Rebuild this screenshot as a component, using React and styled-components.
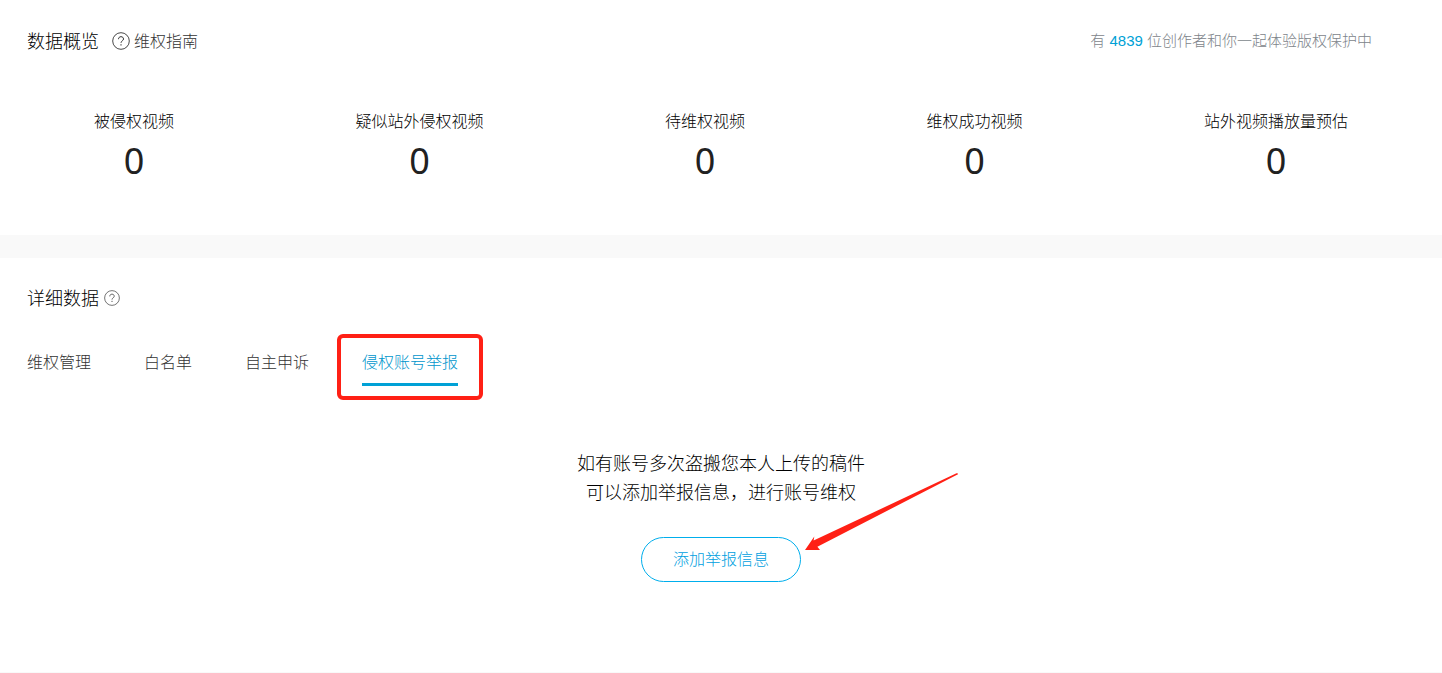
import React, { useState } from 'react';
import styled, { createGlobalStyle } from 'styled-components';

const GlobalStyle = createGlobalStyle`
  * {
    box-sizing: border-box;
  }

  body {
    margin: 0;
    background: #f9f9f9;
    color: #000;
    font-family: 'Noto Sans', 'Noto Sans CJK SC', sans-serif;
    font-weight: 300;
  }
`;

const Page = styled.main`
  display: flex;
  flex-direction: column;
  gap: 23px;
`;

const Section = styled.section`
  background: #fff;
  padding: 28px 27px ${props => props.$bottom};
`;

const SectionHeader = styled.header`
  display: flex;
  align-items: center;
  gap: ${props => props.$gap};
`;

const Title = styled.h2`
  margin: 0;
  font-size: 18px;
  line-height: 24px;
  font-weight: 300;
`;

const GuideLink = styled.a`
  display: flex;
  align-items: center;
  gap: 4px;
  font-size: 16px;
  line-height: 26px;
  color: #333;
  text-decoration: none;
`;

const HelpButton = styled.button`
  display: flex;
  padding: 0;
  border: none;
  background: none;
  color: #505050;
  cursor: pointer;
`;

const CreatorCount = styled.p`
  margin: 0 43px 0 auto;
  font-family: 'Liberation Sans', 'Noto Sans CJK SC', sans-serif;
  font-size: 15px;
  line-height: 24px;
  color: #7d848a;

  span {
    color: #00a1d6;
  }
`;

const Stats = styled.dl`
  display: flex;
  justify-content: space-between;
  margin: 55px 0 0;
  padding: 0 67px;
`;

const Stat = styled.div`
  text-align: center;
`;

const StatLabel = styled.dt`
  font-size: 16px;
  line-height: 24px;
`;

const StatValue = styled.dd`
  margin: 4px 0 0;
  font-size: 36px;
  line-height: 48px;
  font-weight: 400;
  color: #212121;
`;

const Tabs = styled.div`
  display: flex;
  gap: 53px;
  margin-top: 38px;
`;

const Tab = styled.button`
  position: relative;
  padding: 0 0 7px;
  border: none;
  border-bottom: 3px solid ${props => (props.$active ? '#00a1d6' : 'transparent')};
  background: none;
  color: ${props => (props.$active ? '#0095cc' : '#333')};
  font: inherit;
  font-size: 16px;
  line-height: 28px;
  cursor: pointer;
`;

const Highlight = styled.span`
  position: absolute;
  inset: -14px -25px -17px;
  border: 4px solid #ff2015;
  border-radius: 6px;
  pointer-events: none;
`;

const EmptyState = styled.div`
  display: flex;
  flex-direction: column;
  align-items: center;
  gap: 30px;
  margin-top: 63px;
`;

const Hint = styled.p`
  margin: 0;
  font-size: 18px;
  line-height: 29px;
  text-align: center;
`;

const ActionWrap = styled.div`
  position: relative;
`;

const AddButton = styled.button`
  display: block;
  padding: 0 31px;
  border: 1px solid #00aeec;
  border-radius: 23px;
  background: #fff;
  color: #00a0e0;
  font: inherit;
  font-size: 16px;
  line-height: 43px;
  cursor: pointer;
`;

const Arrow = styled.svg`
  position: absolute;
  left: 100%;
  bottom: 31px;
  margin-left: 4px;
  pointer-events: none;
`;

const HelpIcon = ({ size }) => (
  <svg width={size} height={size} viewBox="0 0 18 18" fill="none" stroke="currentColor" aria-hidden="true">
    <circle cx="9" cy="9" r="8.3" strokeWidth="0.9" />
    <path d="M6.5 7.2C6.5 5.6 7.5 4.7 9 4.7s2.5.9 2.5 2.3c0 1.8-2.5 1.9-2.5 3.8" strokeWidth="1" />
    <path d="M9 12.2v1.3" strokeWidth="1.1" />
  </svg>
);

const stats = [
  { label: '被侵权视频', value: 0 },
  { label: '疑似站外侵权视频', value: 0 },
  { label: '待维权视频', value: 0 },
  { label: '维权成功视频', value: 0 },
  { label: '站外视频播放量预估', value: 0 },
];

const tabs = ['维权管理', '白名单', '自主申诉', '侵权账号举报'];

const App = () => {
  const [activeTab, setActiveTab] = useState('侵权账号举报');

  return (
    <>
      <GlobalStyle />
      <Page>
        <Section $bottom="50px">
          <SectionHeader $gap="13px">
            <Title>数据概览</Title>
            <GuideLink href="#guide">
              <HelpIcon size={18} />
              维权指南
            </GuideLink>
            <CreatorCount>
              有 <span>4839</span> 位创作者和你一起体验版权保护中
            </CreatorCount>
          </SectionHeader>
          <Stats>
            {stats.map(stat => (
              <Stat key={stat.label}>
                <StatLabel>{stat.label}</StatLabel>
                <StatValue>{stat.value}</StatValue>
              </Stat>
            ))}
          </Stats>
        </Section>

        <Section $bottom="90px">
          <SectionHeader $gap="5px">
            <Title id="detail-title">详细数据</Title>
            <HelpButton type="button" aria-labelledby="detail-title">
              <HelpIcon size={16} />
            </HelpButton>
          </SectionHeader>
          <Tabs role="tablist">
            {tabs.map(tab => (
              <Tab
                key={tab}
                type="button"
                role="tab"
                aria-selected={tab === activeTab}
                $active={tab === activeTab}
                onClick={() => setActiveTab(tab)}
              >
                {tab}
                {tab === '侵权账号举报' && <Highlight />}
              </Tab>
            ))}
          </Tabs>
          <EmptyState>
            <Hint>
              如有账号多次盗搬您本人上传的稿件
              <br />
              可以添加举报信息，进行账号维权
            </Hint>
            <ActionWrap>
              <AddButton type="button">添加举报信息</AddButton>
              <Arrow width="154" height="78" viewBox="0 0 154 78" aria-hidden="true">
                <path d="M0 77 9.3 63.5 8.6 67.6 151.5.3Q153.5.2 153 1.3L12.4 73.7 15 77Z" fill="#ff2015" />
              </Arrow>
            </ActionWrap>
          </EmptyState>
        </Section>
      </Page>
    </>
  );
};

export default App;
